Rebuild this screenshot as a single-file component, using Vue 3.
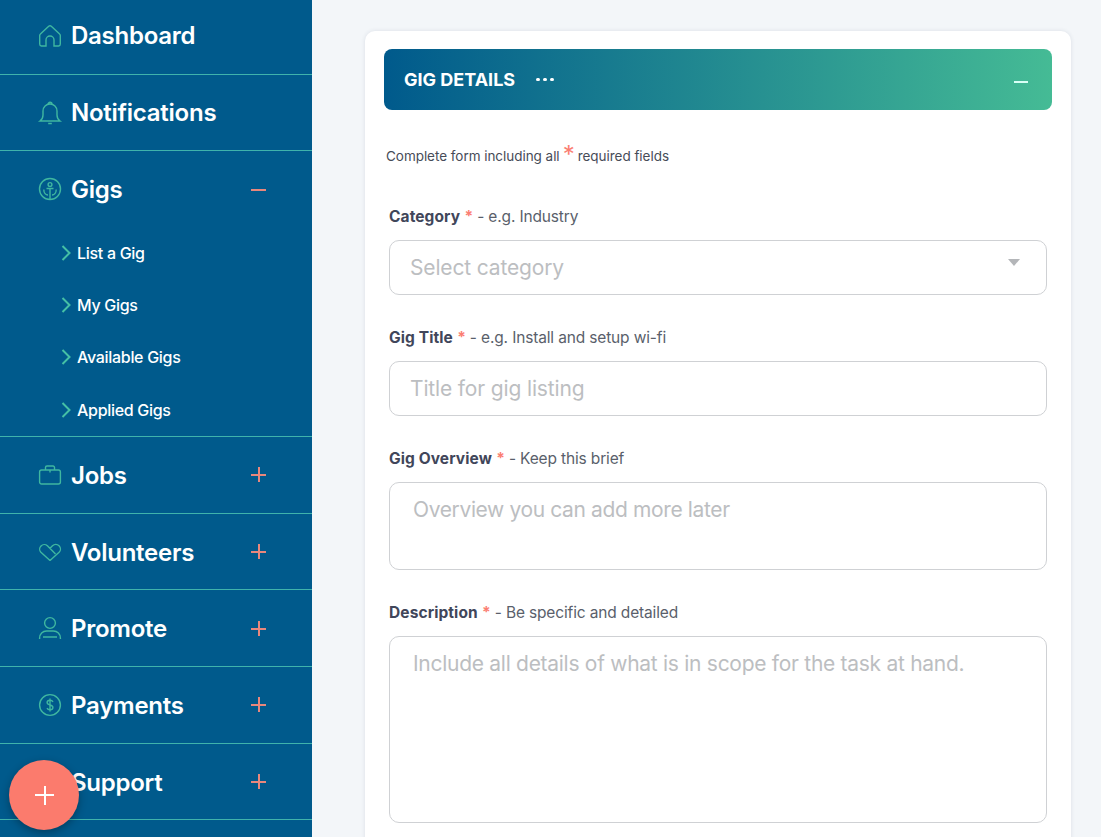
<script setup>
const subs = ['List a Gig', 'My Gigs', 'Available Gigs', 'Applied Gigs']
const after = [
  { name: 'Jobs', icon: 'jobs' },
  { name: 'Volunteers', icon: 'heart' },
  { name: 'Promote', icon: 'user' },
  { name: 'Payments', icon: 'pay' },
  { name: 'Support', icon: 'none' },
]
</script>

<template>
  <div class="page">
    <aside class="side">
      <div class="row">
        <svg class="ico" viewBox="0 0 22 22"><path d="M7 21H2.500A2 2 0 0 1 .7 19V10.500a2 2 0 0 1 .7-1.500L9.700 1.300a2 2 0 0 1 2.600 0L20.600 9a2 2 0 0 1 .7 1.500V19a2 2 0 0 1-1.800 2H15v-6a4 4 0 0 0-8 0z" /></svg>
        <span class="name">Dashboard</span>
      </div>
      <div class="row">
        <svg class="ico" viewBox="0 0 22 22"><path d="M1 19c2-1.500 3-3 3-6V9a7 7 0 0 1 14 0v4c0 3 1 4.500 3 6zM9 2.300a2 2 0 0 1 4 0M9.200 21.500h3.600" /></svg>
        <span class="name">Notifications</span>
      </div>
      <div class="group">
        <div class="row plain">
          <svg class="ico" viewBox="0 0 22 22"><circle cx="11" cy="11" r="10.500" /><circle cx="11" cy="6.500" r="1.900" /><path d="M11 10.500v11M7.500 10.500h7M4.800 11.500c0 3.500 2 5.500 4.200 5.500M17.200 11.500c0 3.500-2 5.500-4.200 5.500" /></svg>
          <span class="name">Gigs</span>
          <span class="toggle minus"></span>
        </div>
        <ul class="subs">
          <li v-for="s in subs" :key="s" class="sub">
            <svg class="chev" viewBox="0 0 10 16"><path d="M1.500 1l7 7-7 7" /></svg>
            <span>{{ s }}</span>
          </li>
        </ul>
      </div>
      <div v-for="a in after" :key="a.name" class="row later">
        <svg v-if="a.icon === 'jobs'" class="ico" viewBox="0 0 22 22"><rect x=".6" y="6" width="20.800" height="14" rx="2" /><path d="M6.500 6V3.500a1.500 1.500 0 0 1 1.500-1.500h6a1.500 1.500 0 0 1 1.500 1.500V6M11 6v2.500" /></svg>
        <svg v-else-if="a.icon === 'heart'" class="ico" viewBox="0 0 22 22"><path d="M11 19.500L1.900 11.300a4.600 4.600 0 0 1 6.500-6.500L16.500 13M11 19.500l9.100-8.200a4.600 4.600 0 0 0-6.600-6.500L11 7.300" /></svg>
        <svg v-else-if="a.icon === 'user'" class="ico" viewBox="0 0 22 22"><circle cx="11" cy="6" r="5.400" /><path d="M.6 22v-1c0-4 3-7 7-7h6.800c4 0 7 3 7 7v1M4 20h14" /></svg>
        <svg v-else-if="a.icon === 'pay'" class="ico" viewBox="0 0 22 22"><circle cx="11" cy="11" r="10.400" /><path d="M14 8c-.5-1.100-1.500-1.700-3-1.700-1.700 0-2.900.9-2.900 2.300s1.200 2 2.900 2.400 2.900 1.100 2.900 2.500-1.200 2.300-2.900 2.300c-1.500 0-2.500-.6-3-1.700M11 4.500v13" /></svg>
        <span v-else class="ico"></span>
        <span class="name">{{ a.name }}</span>
        <span class="toggle plus"></span>
      </div>
    </aside>

    <main class="main">
      <section class="card">
        <header class="head">
          <h2>GIG DETAILS</h2>
          <span class="dots"><i></i><i></i><i></i></span>
          <span class="collapse"></span>
        </header>
        <p class="intro">Complete form including all <b>*</b> required fields</p>

        <label class="lbl first"><strong>Category</strong> <em>*</em> - e.g. Industry</label>
        <div class="field">
          <span>Select category</span>
          <i class="caret"></i>
        </div>

        <label class="lbl"><strong>Gig Title</strong> <em>*</em> - e.g. Install and setup wi-fi</label>
        <div class="field"><span>Title for gig listing</span></div>

        <label class="lbl"><strong>Gig Overview</strong> <em>*</em> - Keep this brief</label>
        <div class="area short"><span>Overview you can add more later</span></div>

        <label class="lbl"><strong>Description</strong> <em>*</em> - Be specific and detailed</label>
        <div class="area tall"><span>Include all details of what is in scope for the task at hand.</span></div>
      </section>
    </main>

    <button class="fab" aria-label="Add"><span></span></button>
  </div>
</template>

<style>
html, body { margin: 0; height: 100%; overflow: hidden; }
</style>

<style scoped>
.page {
  position: relative;
  display: flex;
  width: 1101px;
  height: 837px;
  overflow: hidden;
  background: #f3f6f9;
  font-family: Inter, "Noto Sans", sans-serif;
}
.side {
  width: 312px;
  flex: none;
  background: #005a8c;
  margin-top: -2px;
  color: #fff;
}
.row {
  display: flex;
  align-items: center;
  height: 75.700px;
  border-bottom: 1px solid #3fb3ac;
  padding-left: 39px;
}
.row.plain { border: 0; height: 75.300px; }
.later .name { padding-top: 1px; }
.group { border-bottom: 1px solid #3fb3ac; }
.ico {
  width: 22px;
  height: 22px;
  flex: none;
  overflow: visible;
  fill: none;
  stroke: #3fb7a0;
  stroke-width: 1.400;
}
.name {
  margin-left: 10px;
  font-size: 24px;
  font-weight: 600;
  letter-spacing: -0.250px;
}
.toggle {
  position: relative;
  width: 15px;
  height: 15px;
  margin-left: auto;
  margin-right: 46px;
}
.toggle::before, .plus::after {
  content: '';
  position: absolute;
  background: #e8877c;
}
.toggle::before { left: 0; right: 0; top: 7px; height: 2px; }
.plus::after { top: 0; bottom: 0; left: 7px; width: 2px; }
.subs { list-style: none; margin: 0; padding: 0 0 0.200px 61px; }
.sub {
  display: flex;
  align-items: center;
  height: 52.300px;
  font-size: 16px;
  font-weight: 500;
  letter-spacing: -0.300px;
}
.chev {
  width: 10px;
  height: 16px;
  margin-right: 6px;
  flex: none;
  fill: none;
  stroke: #45c0a5;
  stroke-width: 2;
}
.main { flex: 1; padding: 31px 30px 0 53px; min-width: 0; }
.card {
  height: 900px;
  box-sizing: border-box;
  background: #fff;
  border-radius: 10px;
  padding: 18px 19px;
  box-shadow: 0 0 4px rgba(40, 60, 90, 0.12);
}
.head {
  display: flex;
  align-items: center;
  height: 61px;
  padding: 0 24px 0 20px;
  border-radius: 8px;
  color: #fff;
  background: linear-gradient(90deg, #005a8c 0%, #45bb95 100%);
}
.head h2 {
  margin: 0;
  font-size: 18px;
  font-weight: 700;
  letter-spacing: 0;
}
.dots { display: flex; gap: 3.500px; margin-left: 21px; }
.dots i { width: 3.500px; height: 3.500px; border-radius: 50%; background: #fff; }
.collapse {
  width: 14px;
  height: 2px;
  margin: 4px 0 0 auto;
  background: #d9fff6;
}
.intro {
  margin: 36px 0 0 2px;
  height: 20px;
  line-height: 20px;
  font-size: 13.500px;
  color: #474c58;
  letter-spacing: -0.040px;
}
.intro b {
  margin: 0 -0.700px;
  font-size: 24px;
  font-weight: 400;
  line-height: 0;
  color: #fb7e72;
  vertical-align: -2px;
}
.lbl {
  display: block;
  margin: 32px 0 0 5px;
  height: 20px;
  line-height: 22px;
  font-size: 15.500px;
  color: #5a5f6b;
  letter-spacing: -0.150px;
}
.lbl.first { margin-top: 40px; }
.lbl strong { font-weight: 700; color: #41465a; letter-spacing: 0.100px; }
.lbl em { font-style: normal; color: #fb7e72; font-weight: 700; }
.field, .area {
  position: relative;
  box-sizing: border-box;
  margin: 14px 5px 0;
  border: 1px solid #cfd1d4;
  border-radius: 10px;
  color: #bcbec1;
  font-size: 21px;
}
.field {
  display: flex;
  align-items: center;
  height: 55px;
  padding-left: 20px;
  letter-spacing: -0.150px;
}
.area { padding: 12px 23px; line-height: 30px; letter-spacing: -0.280px; }
.short { height: 88px; letter-spacing: -0.370px; }
.tall { height: 187px; }
.caret {
  position: absolute;
  right: 26px;
  top: 18px;
  border-left: 6.500px solid transparent;
  border-right: 6.500px solid transparent;
  border-top: 7px solid #b4b6b9;
}
.fab {
  position: absolute;
  left: 9px;
  top: 760px;
  width: 70px;
  height: 70px;
  padding: 0;
  border: 0;
  border-radius: 50%;
  background: #fb7b6d;
  box-shadow: 0 3px 8px rgba(0, 0, 0, 0.3);
}
.fab span {
  position: absolute;
  left: 26px;
  top: 34px;
  width: 19px;
  height: 2px;
  background: #fff;
}
.fab span::after {
  content: '';
  position: absolute;
  left: 8.500px;
  top: -8.500px;
  width: 2px;
  height: 19px;
  background: #fff;
}
</style>
